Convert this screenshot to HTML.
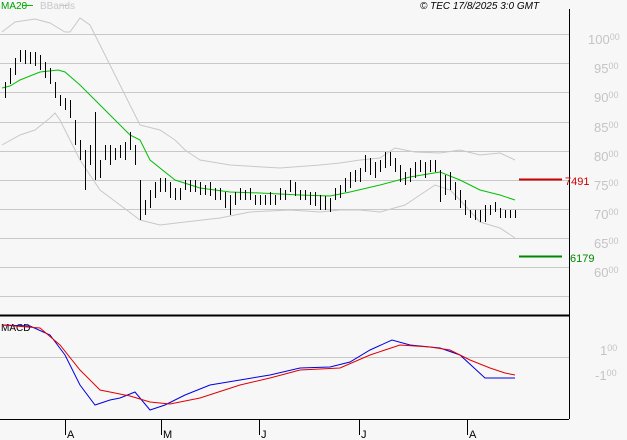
<!DOCTYPE html><html><head><style>body{margin:0;background:#f7f7f7}svg{display:block;font-family:"Liberation Sans",sans-serif}</style></head><body>
<svg width="627" height="440" viewBox="0 0 627 440">
<rect width="627" height="440" fill="#f7f7f7"/>
<g stroke="#c8c8c8" stroke-width="1">
<line x1="0" y1="34.5" x2="569" y2="34.5"/><line x1="0" y1="63.5" x2="569" y2="63.5"/><line x1="0" y1="92.5" x2="569" y2="92.5"/><line x1="0" y1="122.5" x2="569" y2="122.5"/><line x1="0" y1="151.5" x2="569" y2="151.5"/><line x1="0" y1="180.5" x2="569" y2="180.5"/><line x1="0" y1="209.5" x2="569" y2="209.5"/><line x1="0" y1="238.5" x2="569" y2="238.5"/><line x1="0" y1="267.5" x2="569" y2="267.5"/><line x1="0" y1="296.5" x2="569" y2="296.5"/><line x1="0" y1="357.5" x2="569" y2="357.5"/>
</g>
<line x1="569.5" y1="9" x2="569.5" y2="419" stroke="#000"/>
<line x1="0" y1="315.5" x2="569" y2="315.5" stroke="#000" stroke-width="2"/>
<line x1="0" y1="419.5" x2="569" y2="419.5" stroke="#000"/>
<g stroke="#000"><line x1="65.5" y1="419" x2="65.5" y2="435"/><line x1="161.5" y1="419" x2="161.5" y2="435"/><line x1="259.5" y1="419" x2="259.5" y2="435"/><line x1="359.5" y1="419" x2="359.5" y2="435"/><line x1="467.5" y1="419" x2="467.5" y2="435"/></g>
<g font-size="11" fill="#000"><text x="67" y="438">A</text><text x="163" y="438">M</text><text x="261" y="438">J</text><text x="361" y="438">J</text><text x="469" y="438">A</text></g>
<g font-size="13" fill="#c4c4c4"><text x="588" y="44">100<tspan font-size="9" dy="-4">00</tspan></text><text x="594" y="73">95<tspan font-size="9" dy="-4">00</tspan></text><text x="594" y="102">90<tspan font-size="9" dy="-4">00</tspan></text><text x="594" y="132">85<tspan font-size="9" dy="-4">00</tspan></text><text x="594" y="161">80<tspan font-size="9" dy="-4">00</tspan></text><text x="594" y="190">75<tspan font-size="9" dy="-4">00</tspan></text><text x="594" y="219">70<tspan font-size="9" dy="-4">00</tspan></text><text x="594" y="248">65<tspan font-size="9" dy="-4">00</tspan></text><text x="594" y="277">60<tspan font-size="9" dy="-4">00</tspan></text><text x="600" y="355">1<tspan font-size="9" dy="-4">00</tspan></text><text x="595" y="380">-1<tspan font-size="9" dy="-4">00</tspan></text></g>
<text x="1" y="9" font-size="10" fill="#00a000">MA20</text><line x1="22" y1="5.5" x2="33" y2="5.5" stroke="#00c000"/>
<text x="40" y="9" font-size="10" fill="#c8c8c8">BBands</text><line x1="60" y1="5.5" x2="68" y2="5.5" stroke="#c8c8c8"/>
<text x="420" y="9" font-size="10" font-style="italic" fill="#000">© TEC 17/8/2025 3:0 GMT</text>
<text x="1" y="331" font-size="10" fill="#000">MACD</text>
<polyline fill="none" stroke="#c8c8c8" points="2,32 15,22 35,19 50,23 65,32 70,32 80,18 90,25 100,45 115,75 125,95 140,125 160,130 175,140 185,150 200,160 230,165 280,168 320,165 340,163 360,160 380,158 395,148 415,152 440,153 460,150 480,155 500,153 515,160"/>
<polyline fill="none" stroke="#c8c8c8" points="2,145 20,135 35,130 50,118 55,113 60,120 80,160 100,190 120,205 140,220 160,225 185,222 220,218 250,212 290,210 320,212 340,210 360,210 380,212 405,205 420,195 435,185 450,190 460,200 480,222 500,228 515,238"/>
<polyline fill="none" stroke="#00c000" points="2,88 10,86 20,80 40,72 58,70 65,72 80,85 100,105 130,135 140,140 150,160 175,180 200,188 230,192 260,193 300,195 330,196 350,192 380,185 410,177 440,172 460,180 480,190 500,195 515,200"/>
<path fill="none" stroke="#000" d="M5.5 82V98M10.5 68V84M15.5 58V75M20.5 50V62M25.5 50V64M30.5 52V64M35.5 52V66M40.5 55V70M45.5 62V78M50.5 68V84M55.5 82V98M60.5 95V106M65.5 98V110M70.5 100V118M75.5 120V145M80.5 140V160M85.5 150V190M90.5 145V165M95.5 112V180M100.5 160V178M105.5 145V160M110.5 145V165M115.5 148V160M120.5 145V158M125.5 142V160M130.5 132V150M135.5 145V165M140.5 180V220M145.5 200V215M150.5 190V208M155.5 182V198M160.5 178V192M165.5 178V192M170.5 182V198M175.5 188V200M180.5 188V200M185.5 180V190M190.5 180V192M195.5 180V192M200.5 182V195M205.5 185V195M210.5 182V196M215.5 188V200M220.5 188V200M225.5 192V208M230.5 195V215M235.5 192V205M240.5 188V200M245.5 190V200M250.5 188V200M255.5 195V205M260.5 195V205M265.5 195V205M270.5 192V205M275.5 195V205M280.5 188V200M285.5 190V200M290.5 180V192M295.5 182V196M300.5 190V200M305.5 190V200M310.5 192V205M315.5 192V206M320.5 195V210M325.5 196V210M330.5 198V212M335.5 188V200M340.5 185V198M345.5 178V192M350.5 172V188M355.5 170V182M360.5 168V182M365.5 155V172M370.5 158V175M375.5 162V178M380.5 160V172M385.5 152V168M390.5 152V166M395.5 158V172M400.5 165V182M405.5 172V185M410.5 168V182M415.5 162V178M420.5 160V172M425.5 162V178M430.5 160V172M435.5 160V172M440.5 170V202M445.5 175V195M450.5 172V190M455.5 182V200M460.5 190V208M465.5 200V215M470.5 210V218M475.5 210V220M480.5 210V222M485.5 205V222M490.5 205V215M495.5 202V212M500.5 208V218M505.5 210V218M510.5 210V218M515.5 210V218"/>
<polyline fill="none" stroke="#0000e0" points="2,325 30,326 50,335 65,355 80,385 95,405 110,400 120,398 135,392 150,410 165,405 185,395 210,385 240,380 270,375 300,368 330,367 350,362 370,350 392,340 410,345 440,348 460,355 485,378 495,378 515,378"/>
<polyline fill="none" stroke="#e00000" points="2,325 40,328 60,345 80,370 100,390 130,396 150,402 170,404 200,398 240,385 270,378 300,370 340,368 370,355 400,345 430,347 450,350 470,360 490,368 505,373 515,375"/>
<line x1="519" y1="179.5" x2="562" y2="179.5" stroke="#cc0000" stroke-width="2"/>
<text x="565" y="185" font-size="11" fill="#cc0000">7491</text>
<line x1="519" y1="256.5" x2="562" y2="256.5" stroke="#008800" stroke-width="2"/>
<text x="570" y="262" font-size="11" fill="#008800">6179</text>
</svg></body></html>
